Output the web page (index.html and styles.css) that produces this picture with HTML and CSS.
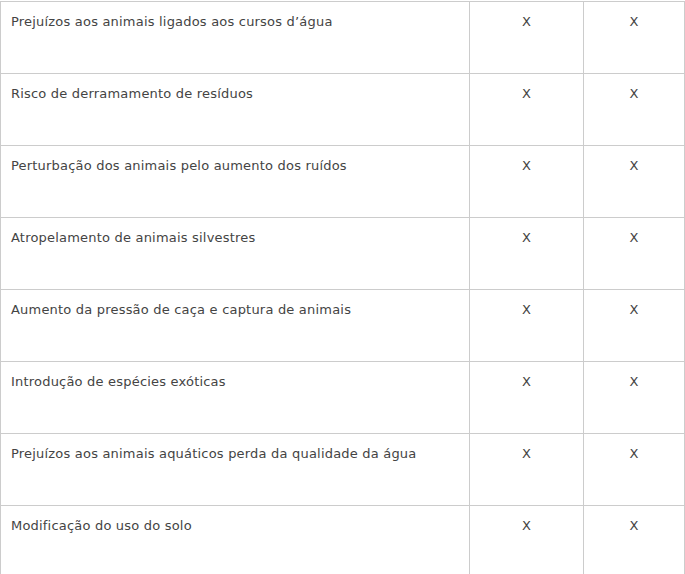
FILE: index.html
```html
<!DOCTYPE html>
<html lang="pt">
<head>
    <meta charset="UTF-8">
    <title>Impactos</title>
    <link rel="stylesheet" href="styles.css">
</head>
<body>
<table class="impacts">
    <colgroup>
        <col class="col-name">
        <col class="col-mark">
        <col class="col-mark2">
    </colgroup>
    <tr><td>Prejuízos aos animais ligados aos cursos d’água</td><td class="mark">X</td><td class="mark">X</td></tr>
    <tr><td>Risco de derramamento de resíduos</td><td class="mark">X</td><td class="mark">X</td></tr>
    <tr><td>Perturbação dos animais pelo aumento dos ruídos</td><td class="mark">X</td><td class="mark">X</td></tr>
    <tr><td>Atropelamento de animais silvestres</td><td class="mark">X</td><td class="mark">X</td></tr>
    <tr><td>Aumento da pressão de caça e captura de animais</td><td class="mark">X</td><td class="mark">X</td></tr>
    <tr><td>Introdução de espécies exóticas</td><td class="mark">X</td><td class="mark">X</td></tr>
    <tr><td>Prejuízos aos animais aquáticos perda da qualidade da água</td><td class="mark">X</td><td class="mark">X</td></tr>
    <tr><td>Modificação do uso do solo</td><td class="mark">X</td><td class="mark">X</td></tr>
</table>
</body>
</html>
```

FILE: styles.css
```css
body {
    margin: 0;
    padding-top: 1px;
    background-color: #fff;
    font-family: "DejaVu Sans", Verdana, sans-serif;
    font-size: 13px;
    letter-spacing: 0.2px;
    color: #444;
}
.impacts {
    width: 685px;
    border-collapse: collapse;
    table-layout: fixed;
}
.col-name {
    width: 469px;
}
.col-mark {
    width: 114px;
}
.impacts td {
    height: 72px;
    padding: 10px 10px;
    border: 1px solid #cccccc;
    vertical-align: top;
    line-height: 20px;
    box-sizing: border-box;
}
.impacts td.mark {
    text-align: center;
}
```
